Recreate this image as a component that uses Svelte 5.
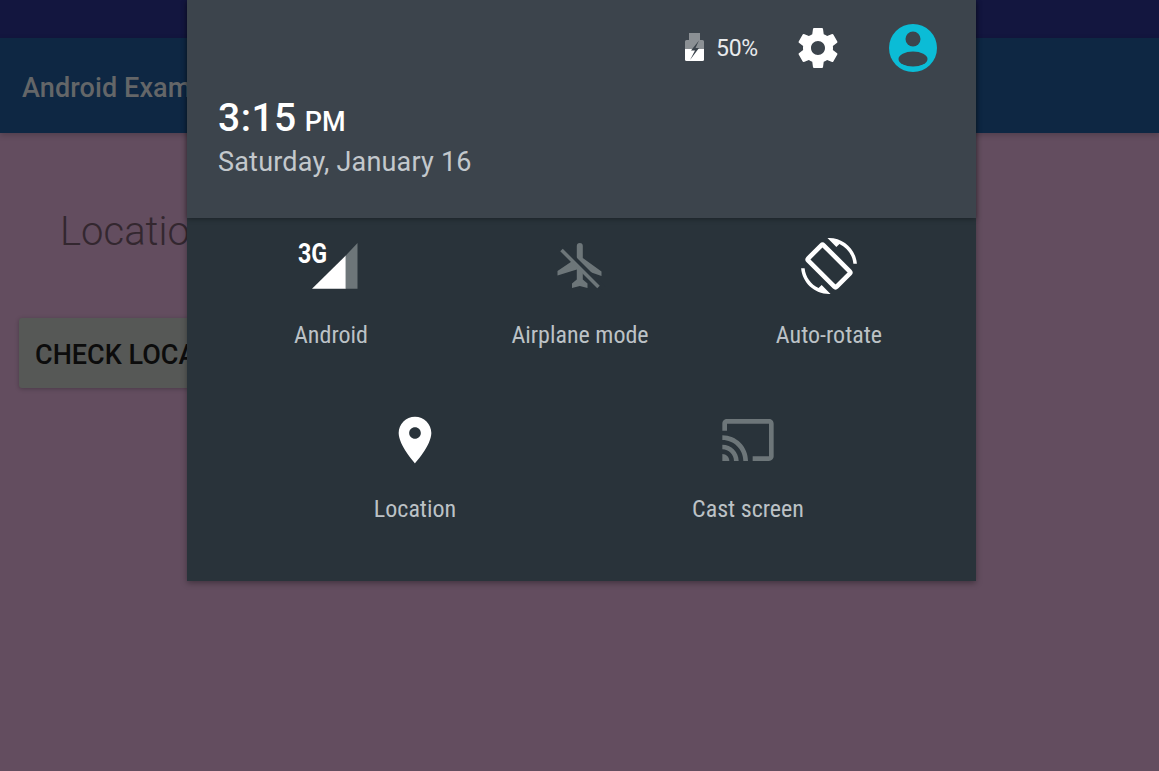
<script>
  const row1 = [
    { label: 'Android', kind: 'signal' },
    { label: 'Airplane mode', kind: 'plane' },
    { label: 'Auto-rotate', kind: 'rotate' }
  ];
  const row2 = [
    { label: 'Location', kind: 'place' },
    { label: 'Cast screen', kind: 'cast' }
  ];
</script>

{#snippet tile(t)}
  <div class="tile">
    <div class="icon">
      {#if t.kind === 'signal'}
        <svg width="56" height="56" viewBox="0 0 56 56">
          <polygon points="9,50.7 42.800,17.400 42.800,50.7" fill="#fff" />
          <polygon points="42.800,17.400 54.500,5 54.500,50.7 42.800,50.7" fill="#6d7679" />
        </svg>
        <span class="threeg">3G</span>
      {:else if t.kind === 'plane'}
        <svg width="56" height="56" viewBox="0 0 56 56">
          <path fill="#6d7679" d="M24.800 8a3 3 0 0 1 6 0V20L49.500 33.500V38L30.800 31.500V41.500L35.500 45.500V50L27.800 48L20 50V45.500L24.800 41.500V31.500L5.500 37.500V33L24.800 20z" />
          <line x1="9.500" y1="8" x2="51.500" y2="50" stroke="#29333a" stroke-width="5" />
          <line x1="9.500" y1="12" x2="46.500" y2="49" stroke="#6d7679" stroke-width="3.500" />
        </svg>
      {:else if t.kind === 'rotate'}
        <svg width="56" height="56" viewBox="0 0 24 24">
          <path fill="#fff" d="M16.480 2.520c3.270 1.550 5.610 4.720 5.970 8.480h1.500C23.440 4.840 18.290 0 12 0l-.66.03 3.810 3.810 1.330-1.320zM7.520 21.480C4.250 19.940 1.910 16.760 1.550 13H.05C.56 19.160 5.710 24 12 24l.66-.03-3.810-3.810-1.330 1.320z" />
          <rect x="7.350" y="3.400" width="9.300" height="17.200" rx="0.700" fill="none" stroke="#fff" stroke-width="2" transform="rotate(-45 12 12)" />
        </svg>
      {:else if t.kind === 'place'}
        <svg width="56" height="56" viewBox="0 0 24 24" fill="#fff"><path d="M12 2C8.130 2 5 5.130 5 9c0 5.250 7 13 7 13s7-7.750 7-13c0-3.870-3.130-7-7-7zm0 9.500c-1.380 0-2.500-1.120-2.500-2.500s1.120-2.500 2.500-2.500 2.500 1.120 2.500 2.500-1.120 2.500-2.500 2.500z" /></svg>
      {:else}
        <svg width="56" height="56" viewBox="0 0 24 24" fill="#6d7679"><path d="M21 3H3c-1.100 0-2 .9-2 2v3h2V5h18v14h-7v2h7c1.100 0 2-.9 2-2V5c0-1.100-.9-2-2-2zM1 18v3h3c0-1.660-1.340-3-3-3zm0-4v2c2.760 0 5 2.240 5 5h2c0-3.870-3.130-7-7-7zm0-4v2c4.970 0 9 4.030 9 9h2c0-6.080-4.930-11-11-11z" /></svg>
      {/if}
    </div>
    <div class="label">{t.label}</div>
  </div>
{/snippet}

<div class="screen">
  <div class="statusbar"></div>
  <header class="toolbar">Android Example</header>
  <main class="content">
    <h1 class="title">Location Example</h1>
    <button class="btn">CHECK LOCATION</button>
  </main>

  <section class="shade">
    <div class="panel">
      <div class="tiles row-three">
        {#each row1 as t}{@render tile(t)}{/each}
      </div>
      <div class="tiles row-two">
        {#each row2 as t}{@render tile(t)}{/each}
      </div>
    </div>
    <div class="head">
      <div class="status">
        <svg class="battery" width="19" height="29" viewBox="0 0 19 29">
          <path d="M4 0h11v7h2.500q1.500 0 1.500 1.500V16H0V8.500Q0 7 1.500 7H4z" fill="#8b9094" />
          <path d="M0 16h19v10.500q0 1.500-1.500 1.500H1.500Q0 28 0 26.500z" fill="#fff" />
          <polygon points="14,7.500 6,17.500 10,17.500 5,27 14,15 10.500,15" fill="#3c444c" />
        </svg>
        <span class="pct">50%</span>
        <svg class="gear" width="48" height="48" viewBox="0 0 24 24" fill="#fff"><path d="M19.430 12.980c.04-.32.07-.64.07-.98s-.03-.66-.07-.98l2.110-1.650c.19-.15.24-.42.12-.64l-2-3.460c-.12-.22-.39-.3-.61-.22l-2.490 1c-.52-.4-1.080-.73-1.690-.98l-.38-2.650C14.460 2.180 14.250 2 14 2h-4c-.25 0-.46.18-.49.42l-.38 2.650c-.61.25-1.170.59-1.690.98l-2.490-1c-.23-.09-.49 0-.61.22l-2 3.460c-.13.22-.07.49.12.64l2.110 1.650c-.04.32-.07.65-.07.98s.03.66.07.98l-2.110 1.650c-.19.15-.24.42-.12.64l2 3.460c.12.22.39.3.61.22l2.490-1c.52.4 1.080.73 1.690.98l.38 2.650c.03.24.24.42.49.42h4c.25 0 .46-.18.49-.42l.38-2.650c.61-.25 1.170-.59 1.690-.98l2.490 1c.23.09.49 0 .61-.22l2-3.460c.12-.22.07-.49-.12-.64l-2.110-1.650zM12 15.500c-1.930 0-3.500-1.570-3.500-3.500s1.570-3.500 3.500-3.500 3.500 1.570 3.500 3.500-1.570 3.500-3.500 3.500z" /></svg>
        <svg class="avatar" width="48" height="48" viewBox="0 0 48 48">
          <circle cx="24" cy="24" r="24" fill="#0bbcd6" />
          <circle cx="24" cy="15" r="7.500" fill="#3c444c" />
          <ellipse cx="24" cy="35" rx="14.500" ry="7.500" fill="#3c444c" />
        </svg>
      </div>
      <div class="clock"><span class="time">3:15</span><span class="ampm">PM</span></div>
      <div class="date">Saturday, January 16</div>
    </div>
  </section>
</div>

<style>
  :global(body) {
    margin: 0;
    background: #634d5f;
  }
  .screen {
    position: relative;
    width: 1159px;
    height: 771px;
    overflow: hidden;
    display: flex;
    flex-direction: column;
    font-family: Roboto, "Liberation Sans", sans-serif;
    background: #634d5f;
  }
  .statusbar {
    height: 38px;
    background: #13163f;
  }
  .toolbar {
    height: 95px;
    box-sizing: border-box;
    padding: 34px 0 0 22px;
    background: #0e2743;
    color: #646668;
    font-size: 27px;
    font-weight: 500;
    letter-spacing: 0.1px;
    line-height: 32px;
    box-shadow: 0 2px 6px rgba(0, 0, 0, 0.2);
    position: relative;
  }
  .content {
    flex: 1;
    padding: 0 0 0 19px;
  }
  .title {
    margin: 74px 0 0 41px;
    font-size: 40px;
    font-weight: 300;
    line-height: 50px;
    color: #33272f;
  }
  .btn {
    display: block;
    margin-top: 61px;
    height: 70px;
    width: 320px;
    padding: 4px 16px 0;
    border: 0;
    border-radius: 3px;
    text-align: left;
    background: #565856;
    color: #0c0c0c;
    font-family: inherit;
    font-size: 27px;
    font-weight: 500;
    box-shadow: 0 1px 4px rgba(0, 0, 0, 0.25);
  }
  .shade {
    position: absolute;
    left: 187px;
    top: 0;
    width: 789px;
    height: 581px;
    background: #29333a;
    box-shadow: 0 2px 6px rgba(0, 0, 0, 0.35);
  }
  .head {
    position: absolute;
    left: 0;
    top: 0;
    width: 100%;
    height: 218px;
    box-sizing: border-box;
    padding: 24px 0 0 31px;
    background: #3c444c;
    box-shadow: 0 1px 5px rgba(0, 0, 0, 0.35);
  }
  .status {
    display: flex;
    align-items: center;
    height: 48px;
    padding-left: 467px;
  }
  .battery {
    margin-top: -1px;
  }
  .pct {
    margin-left: 12px;
    width: 75px;
    color: #e8eaec;
    font-size: 23px;
    letter-spacing: -0.3px;
  }
  .gear {
    margin-left: 3px;
  }
  .avatar {
    margin-left: 47px;
  }
  .clock {
    margin-top: 21px;
    color: #fff;
    line-height: 50px;
  }
  .time {
    font-size: 39px;
    font-weight: 500;
    letter-spacing: 0.5px;
  }
  .ampm {
    margin-left: 8px;
    font-size: 27px;
    font-weight: 500;
  }
  .date {
    margin-top: -7px;
    color: #c3c8cc;
    font-size: 27px;
    letter-spacing: 0.2px;
    line-height: 36px;
  }
  .panel {
    padding-top: 238px;
  }
  .tiles {
    display: grid;
    justify-content: center;
  }
  .row-three {
    grid-template-columns: repeat(3, 249px);
    margin-left: -3px;
  }
  .row-two {
    grid-template-columns: repeat(2, 333px);
    margin-top: 62px;
  }
  .tile {
    display: flex;
    flex-direction: column;
    align-items: center;
  }
  .icon {
    position: relative;
    width: 56px;
    height: 56px;
  }
  .icon svg {
    display: block;
    overflow: hidden;
  }
  .threeg {
    position: absolute;
    left: -5px;
    top: 2px;
    color: #fff;
    font-size: 27px;
    font-weight: 700;
    line-height: 28px;
    transform: scaleX(0.86);
    transform-origin: left center;
  }
  .label {
    margin-top: 26px;
    color: #bcc2c6;
    font-size: 24px;
    line-height: 30px;
    white-space: nowrap;
    font-stretch: 75%;
  }
</style>
